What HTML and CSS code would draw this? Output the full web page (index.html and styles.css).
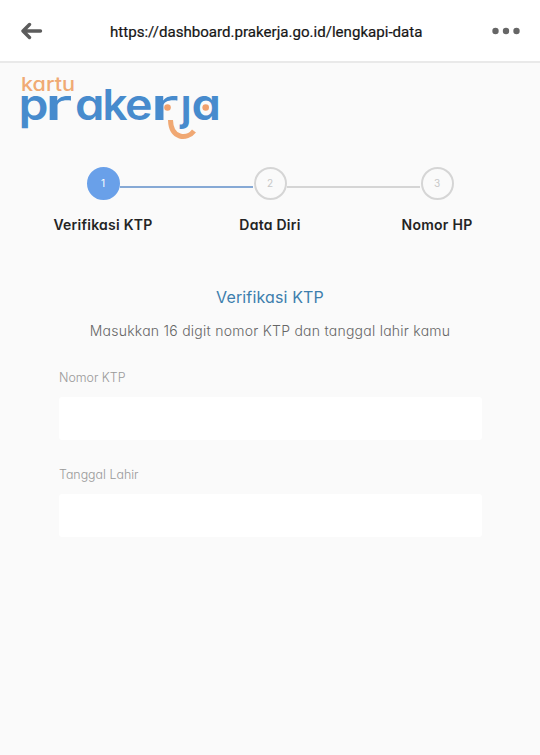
FILE: index.html
```html
<!DOCTYPE html>
<html lang="id">
<head>
    <meta charset="UTF-8">
    <meta name="viewport" content="width=device-width, initial-scale=1.0">
    <title>Kartu Prakerja</title>
    <link rel="stylesheet" href="styles.css">
</head>
<body>

    <header class="topbar">
        <svg class="back" width="22" height="18" viewBox="0 0 22 18">
            <path d="M19.500 9H3M8.500 2.500L2 9L8.500 15.500" />
        </svg>
        <span class="url">https://dashboard.prakerja.go.id/lengkapi-data</span>
        <svg class="more" width="28" height="8" viewBox="0 0 28 8">
            <circle cx="3.5" cy="4" r="3.2" />
            <circle cx="14" cy="4" r="3.2" />
            <circle cx="24.5" cy="4" r="3.2" />
        </svg>
    </header>

    <svg class="logo" width="204" height="70" viewBox="0 0 204 70">
        <text class="logo-small" x="0" y="20.500" textLength="54" lengthAdjust="spacingAndGlyphs">kartu</text>
        <text class="logo-big" y="49.500"><tspan x="-2.5" textLength="30" lengthAdjust="spacingAndGlyphs">p</tspan><tspan class="wide" x="23.5" textLength="28" lengthAdjust="spacingAndGlyphs">r</tspan><tspan x="54" textLength="29.5" lengthAdjust="spacingAndGlyphs">a</tspan><tspan x="81.5" textLength="25" lengthAdjust="spacingAndGlyphs">k</tspan><tspan x="104" textLength="27.5" lengthAdjust="spacingAndGlyphs">e</tspan><tspan class="wide" x="129" textLength="29" lengthAdjust="spacingAndGlyphs">r</tspan><tspan x="159.500">j</tspan><tspan x="170.500" textLength="29.5" lengthAdjust="spacingAndGlyphs">a</tspan></text>
        <rect class="logo-gap" x="158" y="12" width="14" height="12.500" />
        <circle class="logo-dot" cx="146.500" cy="37.500" r="3.300" />
        <circle class="logo-dot" cx="184.700" cy="37.500" r="3.300" />
        <path class="smile" d="M149.500 50C150 69 166 70 173 61" />
    </svg>

    <main>
        <div class="steps">
            <div class="step active">
                <span class="number">1</span>
                <span class="name">Verifikasi KTP</span>
            </div>
            <div class="line active"></div>
            <div class="step">
                <span class="number">2</span>
                <span class="name">Data Diri</span>
            </div>
            <div class="line"></div>
            <div class="step">
                <span class="number">3</span>
                <span class="name">Nomor HP</span>
            </div>
        </div>

        <h1>Verifikasi KTP</h1>
        <p class="info">Masukkan 16 digit nomor KTP dan tanggal lahir kamu</p>

        <form>
            <label for="ktp">Nomor KTP</label>
            <input type="text" id="ktp">
            <label for="lahir">Tanggal Lahir</label>
            <input type="text" id="lahir">
        </form>
    </main>

</body>
</html>
```
FILE: styles.css
```css
* {
    box-sizing: border-box;
}
body {
    margin: 0;
    min-height: 755px;
    background-color: #fafafa;
    font-family: Inter, "Open Sans", sans-serif;
    font-feature-settings: "cv11";
}

.topbar {
    display: flex;
    align-items: center;
    height: 63px;
    padding: 0 20px 0 21px;
    background-color: #fff;
    border-bottom: 2px solid #e9e9e9;
}
.back {
    fill: none;
    stroke: #5c5c5c;
    stroke-width: 3.4;
    stroke-linecap: round;
    stroke-linejoin: round;
}
.url {
    flex: 1;
    margin: 2px 0 0 67px;
    font-family: Roboto, sans-serif;
    font-size: 15.1px;
    color: #161616;
    -webkit-text-stroke: 0.2px #161616;
}
.more {
    fill: #666;
}

.logo {
    display: block;
    margin: 7px 0 0 21px;
    overflow: visible;
}
.logo-small {
    font-size: 19px;
    font-weight: 500;
    fill: #f0aa74;
}
.logo-big {
    font-size: 43px;
    font-weight: 600;
    fill: #478bcd;
}
.logo-big .wide {
    font-weight: 500;
}
.logo-gap {
    fill: #fafafa;
}
.logo-dot {
    fill: #f0a16d;
}
.smile {
    fill: none;
    stroke: #f0a873;
    stroke-width: 5;
}

.steps {
    display: flex;
    width: 367px;
    margin: 27px auto 0;
}
.step {
    display: flex;
    flex-direction: column;
    align-items: center;
    width: 33px;
}
.number {
    width: 33px;
    height: 33px;
    border: 2px solid #d5d5d5;
    border-radius: 50%;
    font-size: 10px;
    line-height: 29px;
    text-align: center;
    color: #c8c8c8;
}
.step.active .number {
    background-color: #69a0e9;
    border-color: #69a0e9;
    color: #fff;
}
.name {
    margin-top: 15px;
    font-size: 14px;
    font-weight: 600;
    line-height: 20px;
    letter-spacing: 0.25px;
    white-space: nowrap;
    color: #242424;
}
.line {
    flex: 1;
    height: 2px;
    margin: 19px 1px 0 0;
    background-color: #d5d5d5;
}
.line.active {
    background-color: #86a9d5;
}

h1 {
    margin: 50px 0 0;
    font-size: 16px;
    font-weight: 400;
    line-height: 24px;
    letter-spacing: 0.15px;
    text-align: center;
    color: #3d7ead;
}
.info {
    margin: 12px 0 0;
    font-size: 14px;
    font-weight: 300;
    line-height: 20px;
    letter-spacing: 0.25px;
    text-align: center;
    color: #666;
}

form {
    width: 423px;
    margin: 28px 0 0 59px;
}
label {
    display: block;
    font-size: 12.4px;
    font-weight: 300;
    line-height: 18px;
    color: #999;
}
input {
    display: block;
    width: 100%;
    height: 43px;
    margin: 10px 0 26px;
    padding: 0 12px;
    border: none;
    border-radius: 3px;
    background-color: #fff;
    font: inherit;
}
```
